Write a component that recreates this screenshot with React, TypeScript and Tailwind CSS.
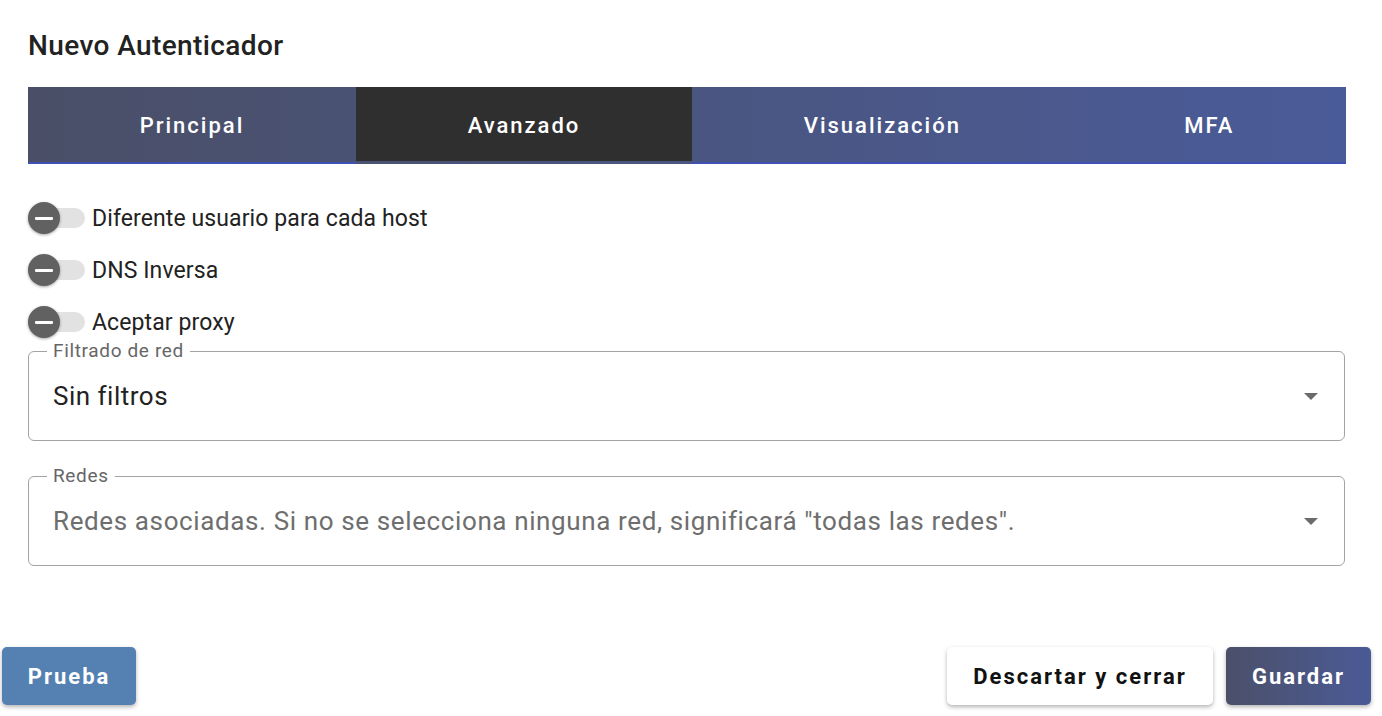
import { useState } from "react";

const tabs = ["Principal", "Avanzado", "Visualización", "MFA"];

const toggles = ["Diferente usuario para cada host", "DNS Inversa", "Aceptar proxy"];

const Toggle = ({ label }: { label: string }) => {
    return (
        <div className="flex items-center h-[52px]">
            <div className="relative w-[57px] h-[32px] flex items-center">
                <div className="ml-[1px] w-[56px] h-[20px] rounded-full bg-[#e2e2e2]" />
                <div className="absolute left-0 top-0 w-[32px] h-[32px] rounded-full bg-[#616161] shadow-[0_1px_3px_rgba(0,0,0,0.35)] flex items-center justify-center">
                    <div className="w-[18px] h-[3px] bg-white rounded-[1px]" />
                </div>
            </div>
            <span className="ml-[7px] pt-[3px] text-[23px] text-[#222] tracking-[0.1px]">{label}</span>
        </div>
    );
};

const Arrow = () => (
    <svg width="14" height="7" viewBox="0 0 14 7" className="shrink-0">
        <path d="M0 0h14L7 7z" fill="#6b6b6b" />
    </svg>
);

const SelectField = ({ legend, value, placeholder }: { legend: string; value?: string; placeholder?: string }) => {
    return (
        <div className="relative border border-[#a3a3a3] rounded-[6px] h-[90px] pl-[24px] pr-[26px] flex items-center justify-between">
            {/* notched label */}
            <span className="absolute left-[18px] -top-[12px] px-[6px] bg-white text-[19px] text-[#666] tracking-[0.65px] leading-[22px]">
                {legend}
            </span>
            {value ? (
                <span className="text-[26px] text-[#222] tracking-[0.5px]">{value}</span>
            ) : (
                <span className="text-[26px] text-[#6e6e6e] tracking-[0.62px]">{placeholder}</span>
            )}
            <Arrow />
        </div>
    );
};

const App = () => {
    const [active] = useState(1);

    return (
        <div className="w-[1382px] h-[716px] bg-white relative font-['Roboto',sans-serif] overflow-hidden">
            <div className="pl-[28px] pr-[36px] pt-[28px]">
                <h1 className="text-[28px] font-medium text-[#222] leading-[36px] tracking-[0.4px]">Nuevo Autenticador</h1>

                {/* Tabs */}
                <div className="mt-[23px] flex h-[77px] bg-gradient-to-r from-[#4a4f67] to-[#4a5b99]">
                    {tabs.map((t, i) => (
                        <div
                            key={t}
                            className={
                                i === active
                                    ? "flex-auto flex items-center justify-center bg-[#2f2f2f] h-[74px] text-white text-[22px] font-medium tracking-[2px] pt-[3px]"
                                    : "flex-auto flex items-center justify-center h-[77px] border-b-[2px] border-[#3f51b5] text-white text-[22px] font-medium tracking-[2px] pt-[1px]"
                            }
                        >
                            {t}
                        </div>
                    ))}
                </div>

                {/* Switches */}
                <div className="mt-[28px] flex flex-col">
                    {toggles.map((t) => (
                        <Toggle key={t} label={t} />
                    ))}
                </div>

                <div className="mt-[3px] flex flex-col gap-[35px] pr-[1px]">
                    <SelectField legend="Filtrado de red" value="Sin filtros" />
                    <SelectField
                        legend="Redes"
                        placeholder={'Redes asociadas. Si no se selecciona ninguna red, significará "todas las redes".'}
                    />
                </div>
            </div>

            {/* Actions */}
            <div className="absolute left-0 right-0 top-[647px] flex justify-between pl-[2px] pr-[11px]">
                <button className="h-[58px] w-[134px] rounded-[5px] bg-[#5481b2] text-white text-[22px] font-bold tracking-[2px] shadow-[0_2px_4px_rgba(0,0,0,0.3)]">
                    Prueba
                </button>
                <div className="flex gap-[13px]">
                    <button className="h-[58px] w-[266px] rounded-[5px] bg-white text-[#111] text-[22px] font-bold tracking-[2px] shadow-[0_2px_4px_rgba(0,0,0,0.3)]">
                        Descartar y cerrar
                    </button>
                    <button className="h-[58px] w-[145px] rounded-[5px] bg-gradient-to-r from-[#4b5069] to-[#4a5a96] text-white text-[22px] font-bold tracking-[2px] shadow-[0_2px_4px_rgba(0,0,0,0.3)]">
                        Guardar
                    </button>
                </div>
            </div>
        </div>
    );
};

export default App;
